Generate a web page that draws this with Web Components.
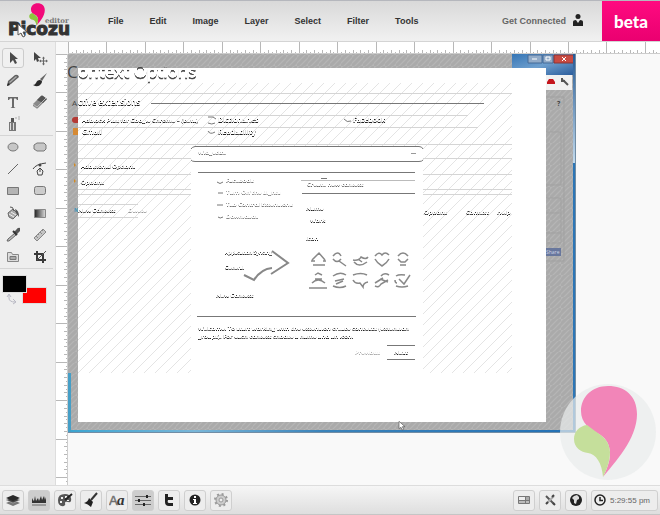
<!DOCTYPE html>
<html lang="en">
<head>
<meta charset="utf-8">
<title>Picozu editor</title>
<style>
html,body{margin:0;height:100%}
body{font-family:"Liberation Sans",Arial,sans-serif;font-size:9px;color:#444;background:#f9f9f9}
</style>
</head>
<body>
<pz-editor></pz-editor>
<script>
const ICONS = {
 pointer:'<path d="M5 2v11l3-3 2 4 2-1-2-4h3z" fill="#4a4a4a"/>',
 move:'<path d="M2 2v9l2-2 1 3 2-1-1-3h3z" fill="#444"/><path d="M11.500 7.500v7M8 11h7" fill="none" stroke="#666"/><path d="M10 8.500l1.500-2 1.500 2zM10 13.500l1.500 2 1.500-2zM9 9.500 7 11l2 1.500zM14 9.500l2 1.500-2 1.500z" fill="#666"/>',
 pencil:'<path d="M2 14l1-5 7-6q3-1 4 2l-8 7z" fill="#606060"/><path d="M4 10l7-6 1 1-7 6z" fill="#aaa"/><path d="M2 14l1-3 2 2z" fill="#222"/>',
 brush:'<path d="M15 1 8 7l2 2z" fill="#666"/><path d="M8 8q-3 0-4 3-1 2-3 2 5 3 8-1 1-1 1-3z" fill="#2a2a2a"/>',
 type:'<path d="M3 3h10v3h-1l-1-1.500H9V13l1.500 1h-5L7 13V4.500H5L4 6H3z" fill="#6a6a6a"/>',
 eraser:'<path d="M1 10l8-8q1-1 2 0l4 3-9 9q-1 1-2 0l-3-2z" fill="#8a8a8a"/><path d="M9 2q1-1 2 0l4 3-4 4-6-3z" fill="#555"/><path d="M1 10l4 3 9-9" fill="none" stroke="#bbb"/>',
 spray:'<path d="M4 6h7v9H4z" fill="#777"/><path d="M5 7h1v7H5zM8 7h1v7H8z" fill="#ddd"/><path d="M6 2h3v4H6z" fill="#555"/><path d="M10 2h2M13 1h2M13 3h2" stroke="#aaa"/>',
 ellipse:'<ellipse cx="8" cy="8" rx="5" ry="4" fill="#c6c6c6" stroke="#777"/>',
 hexagon:'<path d="M5 4h7l2 2v4l-2 2H5l-3-2V6z" fill="#c6c6c6" stroke="#777"/>',
 line:'<path d="M3 13 13 3" stroke="#666"/>',
 pen:'<path d="M1 8Q4 3 14 2" fill="none" stroke="#444"/><circle cx="8" cy="4" r="1.500" fill="#444"/><path d="M8 7l3 3-1 4H6l-1-4z" fill="#eee" stroke="#444"/><path d="M8 8v3" stroke="#444"/>',
 rect:'<path d="M2.500 4.500h11v7h-11z" fill="#b4b4b4" stroke="#777"/>',
 rounded:'<rect x="2.500" y="3.500" width="11" height="8" rx="2" fill="#ccc" stroke="#777"/>',
 bucket:'<path d="M3 8l5-4 5 5-5 5-4-2z" fill="#aaa" stroke="#666"/><path d="M5 2q3-1 4 4" stroke="#555" fill="none"/><path d="M10 4q4 1 4 8l-3-4z" fill="#555"/><path d="M4 9l5 3M6 7l5 3" stroke="#eee"/>',
 gradient:'<defs><linearGradient id="g"><stop stop-color="#222"/><stop offset="1" stop-color="#ddd"/></linearGradient></defs><path d="M2.500 4.500h11v8h-11z" fill="url(#g)" stroke="#888"/>',
 dropper:'<path d="M15 1q-2-1-4 2L9 5l3 2 3-3z" fill="#555"/><path d="M10 6 3 12l-1 2h2l7-6z" fill="#bbb" stroke="#666"/><path d="M8 4l4 4" stroke="#333" stroke-width="2"/>',
 ruler:'<path d="M2 11 11 2l3 3-9 9z" fill="#c4c4c4" stroke="#888"/><path d="M4 9l2 2M6 7l1 1M8 5l2 2M10 3l1 1" stroke="#888"/>',
 picture:'<path d="M2.500 3.500h4l1 2h6v7h-11z" fill="#ddd" stroke="#888"/><path d="M5 7.500h6v3H5z" fill="#aaa" stroke="#777"/>',
 crop:'<path d="M5 2v9h9M2 5h9v9" stroke="#3a3a3a" stroke-width="2" fill="none"/><path d="M5 11 14 2" stroke="#555"/>',
 layers:'<path d="M1 11l7-3 7 3-7 3z" fill="#777"/><path d="M1 8l7-3 7 3-7 3z" fill="#444" stroke="#ccc" stroke-width=".5"/><path d="M1 6l7-3 7 3-7 3z" fill="#2a2a2a"/>',
 histogram:'<path d="M1 11V6l1 2 1 1 1-5 1 5 2-3 1 3 2-5 1 4 2-4 1 4 1-3v6z" fill="#333"/><path d="M1 13h14" stroke="#666"/>',
 palette:'<path d="M8 2q-7 0-7 6 0 7 6 6 2-1 1-3 0-2 3-1 4 1 3-4-1-4-6-4z" fill="#555"/><path d="M4 5h2v2H4zM8 4h2v2H8zM3 9h2v2H3zM10 8h2v1h-2z" fill="#eee"/><path d="M15 2 8 8" stroke="#222" stroke-width="2"/>',
 broom:'<path d="M14 1 8 8" stroke="#333" stroke-width="2"/><path d="M6 6l4 4-2 5q-3-3-7-4 4-1 5-5z" fill="#222"/>',
 sliders:'<path d="M0 4.500h16M0 8.500h16M0 12.500h16" stroke="#666"/><path d="M11 3h2v3h-2zM3 7h2v3H3zM8 11h2v3H8z" fill="#222"/>',
 tee:'<path d="M4 2h3v3h5v3H7q-1 3 1 3h4v3H8q-4 0-4-4z" fill="#222"/>',
 info:'<circle cx="8" cy="8" r="5.500" fill="#222"/><path d="M7 4h2v2H7zM6 7h3v4h1v1H6v-1h1V8H6z" fill="#fff"/>',
 gear:'<circle cx="8" cy="8" r="5" fill="#ccc" stroke="#999"/><circle cx="8" cy="8" r="6" fill="none" stroke="#999" stroke-width="2" stroke-dasharray="2 2.700"/><circle cx="8" cy="8" r="2" fill="#eee" stroke="#999"/>',
 layout:'<path d="M2.500 4.500h11v7h-11z" fill="#eee" stroke="#777"/><path d="M9 5h4v3H9z" fill="#aaa"/><path d="M3 9h10v2H3z" fill="#bbb"/><path d="M9.500 4v8M2 8.500h12" stroke="#777"/>',
 wrench:'<path d="M4 4l8 8" stroke="#555" stroke-width="2"/><path d="M12 4 5 11" stroke="#aaa" stroke-width="2"/><path d="M10 5l2-2M4 12l2-2M11 11l2 2" stroke="#444" stroke-width="2"/>',
 globe:'<circle cx="8" cy="8" r="6" fill="#222"/><path d="M6 4l3-1 2 2v2l-2 1-1 4-2-1V8L4 6z" fill="#ddd"/>',
 clock:'<circle cx="8" cy="8" r="5" fill="none" stroke="#222" stroke-width="1.500"/><path d="M8 5v3.500h3" fill="none" stroke="#222" stroke-width="1.500"/>',
 user:'<circle cx="8" cy="3.500" r="2.500" fill="#222"/><path d="M3 13V9q0-2 3-2l2 3 2-3q3 0 3 2v4z" fill="#222"/>',
 font:'<text x="0" y="13" font-family="Liberation Sans" font-size="13" fill="#666" stroke="#777" stroke-width=".5">A</text><text x="8" y="13" font-family="Liberation Serif" font-style="italic" font-weight="700" font-size="15" fill="#333">a</text>'
};
const LEAF = '<path d="M603 478C615 463 637 440 637 415C637 397 625 387 608 387C592 387 581 398 581 412C581 424 590 430 597 434C605 438 610 444 610 455C610 463 606 472 603 478z" fill="var(--pink)"/><path d="M587 426C579 427 574 433 574 440C574 449 581 453 588 454C596 455 602 464 603 478C606 472 610 463 610 453C609 442 604 438 595 432z" fill="var(--green)"/>';
const CURSOR = '<path d="M0 0v11l3-2 2 4 2-1-2-4h4z" fill="#fff" stroke="#555"/>';

function define(name, html, setup) {
  customElements.define(name, class extends HTMLElement {
    connectedCallback() {
      if (this.shadowRoot) return;
      this.attachShadow({mode:'open'}).innerHTML = typeof html === 'function' ? html(this) : html;
      if (setup) setup(this, this.shadowRoot);
    }
  });
}

define('pz-icon', el => `<style>:host{display:block;width:16px;height:16px}svg{display:block}</style>
<svg width="16" height="16" viewBox="0 0 16 16" aria-hidden="true">${ICONS[el.getAttribute('name')]}</svg>`);

define('pz-tool', el => `<style>:host{display:flex;justify-content:center;align-items:center;height:22px}
button{display:flex;align-items:center;justify-content:center;width:22px;height:20px;padding:0;border:1px solid transparent;border-radius:3px;background:none}
:host([active]) button{border-color:#ccc;background:#f0f0f0}</style>
<button aria-label="${el.getAttribute('name')}"><pz-icon name="${el.getAttribute('name')}"></pz-icon></button>`);

define('pz-bar-button', el => `<style>:host{display:block}
button{display:flex;align-items:center;justify-content:center;gap:2px;min-width:22px;height:21px;padding:0 2px;border:1px solid #cfcfcf;border-radius:3px;background:#ededed;font:8px "Liberation Sans",Arial,sans-serif;color:#666;box-sizing:border-box}
:host([wide]) button{padding:0 7px 0 0}
:host([active]) button{background:#cdcdcd}</style>
<button aria-label="${el.getAttribute('name')}"><pz-icon name="${el.getAttribute('name')}"></pz-icon><slot></slot></button>`);

define('pz-logo', `<style>:host{display:block;--pink:#f2097a;--green:#8cc63f}svg{display:block}</style>
<svg width="72" height="40" viewBox="0 0 72 40" role="img" aria-label="Picozu editor">
<text x="8" y="34" font-family="DejaVu Sans" font-weight="700" font-size="17" fill="#333" stroke="#333">Picozu</text>
<text x="45" y="22" font-family="DejaVu Serif" font-weight="700" font-size="7" fill="#777">editor</text>
<svg x="28" y="2" width="18" height="23" viewBox="573 386 65 93">${LEAF}</svg>
<g transform="translate(18 23)">${CURSOR}</g>
</svg>`);

define('pz-header', `<style>
:host{display:flex;align-items:stretch;height:40px;border-top:1px solid #b5b7bd;border-bottom:1px solid #d4d4d4;background:linear-gradient(#d9d9d9,#f1f1f1)}
nav{display:flex;align-items:center;gap:26px;padding-left:36px;flex:1}
a{color:#333;text-decoration:none;font-weight:700;font-size:9px;line-height:12px}
.user{display:flex;align-items:center;gap:4px;padding-right:16px;color:#666}
.beta{display:flex;align-items:center;justify-content:center;width:58px;background:linear-gradient(#ff0a80,#ea0070);color:#fff;font:900 17px Lato,sans-serif}
</style><pz-logo></pz-logo>
<nav><a href="#">File</a><a href="#">Edit</a><a href="#">Image</a><a href="#">Layer</a><a href="#">Select</a><a href="#">Filter</a><a href="#">Tools</a></nav>
<a class="user" href="#">Get Connected <pz-icon name="user"></pz-icon></a><div class="beta">beta</div>`);

const tools = (...n) => n.map(t => `<pz-tool name="${t}"${t==='pointer'?' active':''}></pz-tool>`).join('');
define('pz-toolbox', `<style>
:host{display:block;background:#eee;padding:5px 2px 0 0;border-right:1px solid #ddd;box-sizing:border-box}
.group{display:grid;grid-template-columns:1fr 1fr;border-bottom:1px solid #d5d5d5}
.colors{display:grid;grid-template-columns:20px 5px 20px;grid-template-rows:12px 6px 11px;padding:6px 0 0 2px}
.colors button{padding:0;border:1px solid #ddd}
.fg{grid-area:1/1/3/3;background:#000;z-index:1}.bg{grid-area:2/2/4/4;background:#f00}
svg{grid-area:3/1;margin-left:4px}
</style>
<div class="group">${tools('pointer','move','pencil','brush','type','eraser','spray')}</div>
<div class="group">${tools('ellipse','hexagon','line','pen','rect','rounded','bucket','gradient','dropper','ruler','picture','crop')}</div>
<div class="colors"><button class="fg" aria-label="Foreground"></button><button class="bg" aria-label="Background"></button>
<svg width="12" height="12"><path d="M3 2v3q0 4 6 4M1 4l2-3 2 3M7 6l3 3-3 2" fill="none" stroke="#b9b9c4"/></svg></div>`);

define('pz-ruler', `<style>:host{display:block;background:#fff;overflow:hidden;min-width:0;min-height:0}svg{display:block}</style><svg></svg>`, (el, root) => {
  const vertical = el.hasAttribute('vertical'), svg = root.querySelector('svg');
  let d = '';
  for (let i = 0; i < 600; i++) {
    const p = Math.round(i * 50 / 13), len = i % 10 === 0 ? 12 : i % 2 ? 2 : 4;
    d += vertical ? `M${12-len} ${p}h${len}v1h-${len}z` : `M${p} ${12-len}h1v${len}h-1z`;
  }
  svg.setAttribute('width', vertical ? 12 : '100%');
  svg.setAttribute('height', vertical ? '100%' : 12);
  svg.innerHTML = `<path d="${d}" fill="#b8b8b8"/>` + (vertical ? '<path d="M11 0h1v2400h-1z" fill="#ccc"/>' : '<path d="M0 11h2400v1H0z" fill="#ccc"/>');
});

define('pz-artwork', `<style>:host{display:block}svg{display:block;font-family:"Open Sans",sans-serif}</style>
<svg width="508" height="379" viewBox="68 54 508 379" role="img" aria-label="Document">
<defs>
<pattern id="dark" width="11" height="11" patternUnits="userSpaceOnUse"><path d="M0 0h11v11H0z" fill="#b5b5b5"/><path d="M-1 6 6-1M0 11 11 0M5 12l7-7" stroke="#aaa" stroke-width="3"/></pattern>
<pattern id="light" width="11" height="11" patternUnits="userSpaceOnUse"><path d="M0 11 11 0" stroke="#e4e4e4"/></pattern>
<linearGradient id="title" x1="0" x2="1" y1="0" y2="1"><stop stop-color="#3575b5"/><stop offset=".5" stop-color="#6e9fce"/><stop offset="1" stop-color="#285a9a"/></linearGradient>
<linearGradient id="edge" x1="0" x2="0" y1="0" y2="1"><stop stop-color="#245a96"/><stop offset="1" stop-color="#c5dcee"/></linearGradient>
<linearGradient id="bottom"><stop stop-color="#3ba4d0"/><stop offset=".25" stop-color="#79b6d8"/><stop offset=".5" stop-color="#3a83ba"/><stop offset="1" stop-color="#2471b5"/></linearGradient>
<filter id="relief" x="-5%" y="-20%" width="110%" height="150%" color-interpolation-filters="sRGB"><feOffset in="SourceAlpha" dy="-1"/><feComponentTransfer result="up"><feFuncA type="linear" slope="2.500"/></feComponentTransfer><feComposite in="SourceGraphic" in2="up" operator="out"/><feComponentTransfer><feFuncA type="linear" slope="1.500"/></feComponentTransfer></filter>
<filter id="relief-large" x="-5%" y="-20%" width="110%" height="150%" color-interpolation-filters="sRGB"><feOffset in="SourceAlpha" dy="-2"/><feComponentTransfer result="up"><feFuncA type="linear" slope="3"/></feComponentTransfer><feComposite in="SourceGraphic" in2="up" operator="out"/></filter>
</defs>
<path d="M68 54h508v379H68z" fill="url(#dark)"/>
<path d="M512 54h64v21h-64z" fill="url(#title)"/>
<path d="M546 75h26v15h-26z" fill="#f2f2f2"/>
<path d="M528 55h14v8h-14zM543 55h10v8h-10z" fill="#92abc8" stroke="#456b98"/><path d="M554 55h20v8h-20z" fill="#c94b42" stroke="#8b3434"/>
<path d="M532 59h5M546 57h4v3h-4zM562 57l4 4M566 57l-4 4" stroke="#fff" fill="none"/>
<path d="M547 82l2-3h4l2 3v2h-8z" fill="#c4151c"/><path d="M563 80l5 5" stroke="#555" stroke-width="2"/><path d="M562 78v3h3" stroke="#555" stroke-width="2" fill="none"/>
<path d="M546 97h18v164h-18M546 132h15v53h-15M546 198h15v45h-15M546 213h15M546 233h15" fill="none" stroke="#a1a1a1"/>
<text x="557" y="106" font-size="7" font-weight="700" fill="#444">?</text>
<path d="M546 248h15v8h-15z" fill="#68779d"/><text x="546" y="254" font-size="5" fill="#cdd4e4">Share</text>
<path d="M573 54h3v110h-3z" fill="url(#edge)"/><path d="M573 163h3v270h-3z" fill="#2c76b6"/>
<path d="M68 430h508v3H68z" fill="url(#bottom)"/><path d="M68 373h3v60h-3z" fill="#459ec6"/><path d="M68 432.500h508M575.500 54v379" stroke="#718da5"/>
<g fill="#444"><text x="67" y="78" font-size="17">C</text><text x="72" y="106" font-size="8">A</text></g>
<path d="M78 117h-3q-3 0-3 3t3 3h3z" fill="#b43a35"/><path d="M73 128h5v7h-5z" fill="#d58a35"/><path d="M74 163l2 2-2 2zM74 179l2 2-2 2z" fill="#d18c28"/><text x="74" y="212" font-size="5" font-weight="700" fill="#3a93b7">N</text>
<path d="M78 68h468v354H78z" fill="#fff"/>
<path d="M78 83h434v290H78z" fill="url(#light)"/>
<path d="M78 93.500h434M78 115.500h390M78 127.500h400M78 144.500h434M78 158.500h434M78 174.500h434M78 189.500h434M78 194.500h434M78 204.500h60M78 217.500h60" stroke="#d5d5d5"/>
<path d="M191 147h232v226H191z" fill="#fff"/>
<path d="M151 103.500h333" stroke="#777"/>
<g filter="url(#relief-large)" fill="#444" stroke="#444" stroke-width=".5"><text x="78" y="79" font-size="17">ontext Options</text></g>
<g filter="url(#relief)" fill="#222" font-size="7" font-weight="600">
<text x="78" y="106" font-size="8">ctive extensions</text>
<text x="82" y="123" font-size="6">Adblock Plus for Google Chrome – (beta)</text><text x="218" y="123">Dictionaries</text><text x="353" y="123">Facebook</text><text x="82" y="135">Gmail</text><text x="218" y="135">Readability</text>
<text x="81" y="169" font-size="6">Additional Options</text><text x="81" y="185" font-size="6">Options</text><text x="78" y="213" font-size="6">New Context</text><text x="128" y="213" font-size="6" fill="#999">Delete</text>
<text x="198" y="155" fill="#777" font-size="6">Widgetize</text>
<g font-size="6"><text x="226" y="183" fill="#666">Facebook</text><text x="226" y="195" fill="#888">Turn Off the Lights</text><text x="226" y="207" fill="#777">Tab Control Extensions</text><text x="226" y="219" fill="#888">Downloads</text><text x="307" y="187" fill="#666">Create new context</text>
<text x="306" y="211">Name</text><text x="310" y="223">Work</text><text x="306" y="241">Icon</text>
<text x="225" y="255" font-size="5">Application Syncing</text><text x="225" y="270" font-size="5">General</text><text x="216" y="298">New Context</text>
<text x="424" y="215">Options</text><text x="466" y="215">Context</text><text x="497" y="215">Help</text>
<text x="198" y="331">Welcome. To start working with the extension create contexts (extension</text><text x="198" y="339">groups). For each context choose a name and an icon.</text>
<text x="355" y="355" fill="#aaa">Previous</text><text x="394" y="355">Next</text></g>
</g>
<g fill="none" stroke="#777">
<path d="M208 117h5l3 2M208 123q4 2 7 0M208 131q2 4 7 1"/>
<path d="M191 149q1-2 4-2.500h224q3 0 4 2.500M191 160q1 1.500 4 1.500h224q3 0 4-1.500"/><path d="M198 172.500h217M302 193.500h113M387 345.500h28M387 359.500h28M321 178.500h6"/><path d="M197 316.500h219"/><path d="M301 180.500h114" stroke="#bbb"/><path d="M411 153.500h5" stroke="#999"/>
<path d="M217 182q3 3 6 0M218 193h5M217 205h6M218 217q2 2 5 0"/>
<path d="M344 119q3 4 7 2"/>
</g>
<path d="M244 275l10 5q7-11 18-12M272 251l16 12-17 11" fill="none" stroke="#888" stroke-width="2"/>
<g fill="none" stroke="#888" stroke-width="1.500">
<path d="M312 260l7-7 6 7M313 265h12M311 261h4M323 261h3"/>
<path d="M333 256q5-6 8 0M333 259q4 5 8 0M339 261l7 5"/>
<path d="M353 260q6 1 8-3 5 3 7 0M354 262q5 6 13 0M358 259l4 3"/>
<path d="M375 256q4-5 7-1 3-4 7 0M375 259q2 4 7 7 5-3 7-7"/>
<path d="M398 256q5-6 10 0M398 259l3 3h4l3-3M400 265h6"/>
<path d="M315 275l3-2 4 2M312 283q6-6 13 0M309 288h18M315 279h7"/>
<path d="M333 276q7-5 13-1M335 281l9-2M333 286q7 3 13 0M336 284l7-3"/>
<path d="M353 275q8-3 14 0M353 280q2 4 7 3l3 4q0-4 5-5"/>
<path d="M381 276q3-4 8-1M380 279l8 3M375 283l8-5M375 286q4 2 6-2l7-4"/>
<path d="M396 276q3-2 9-1M399 279l5 5 6-9M395 280q0 3 2 3M396 286q6 2 12 0"/>
</g>
<svg x="399" y="421" width="10" height="14" viewBox="0 0 15 20" overflow="visible">${CURSOR}</svg>
</svg>`);

define('pz-workspace', `<style>
:host{display:block;position:relative;overflow:hidden;background:#f9f9f9;min-width:0;min-height:0}
.mark{position:absolute;right:4px;bottom:5px;--pink:#f285b8;--green:#c5df9b}
svg{display:block}
</style><pz-artwork></pz-artwork>
<svg class="mark" width="96" height="96" viewBox="560 385 96 96"><circle cx="608" cy="433" r="48" fill="#e9edec" opacity=".7"/>${LEAF}</svg>`);

define('pz-statusbar', `<style>
:host{display:flex;align-items:center;gap:4px;height:28px;padding:0 2px;border-top:1px solid #ddd;border-bottom:1px solid #c5c5c5;background:linear-gradient(#f6f6f6,#dedede)}
.space{flex:1}</style>
<pz-bar-button name="layers"></pz-bar-button><pz-bar-button name="histogram" active></pz-bar-button><pz-bar-button name="palette"></pz-bar-button><pz-bar-button name="broom"></pz-bar-button><pz-bar-button name="font"></pz-bar-button><pz-bar-button name="sliders" active></pz-bar-button><pz-bar-button name="tee"></pz-bar-button><pz-bar-button name="info"></pz-bar-button><pz-bar-button name="gear"></pz-bar-button>
<span class="space"></span>
<pz-bar-button name="layout"></pz-bar-button><pz-bar-button name="wrench"></pz-bar-button><pz-bar-button name="globe"></pz-bar-button><pz-bar-button name="clock" wide>5:29:55 pm</pz-bar-button>`);

define('pz-editor', `<style>
:host{display:grid;height:100vh;grid-template-rows:42px 12px 1fr 30px;grid-template-columns:56px 12px 1fr;background:#f9f9f9}
pz-header,pz-statusbar{grid-column:1/-1}
pz-toolbox{grid-column:1;grid-row:2/4}
.h{grid-column:3;grid-row:2}.v{grid-column:2;grid-row:3}
pz-workspace{grid-column:3;grid-row:3}
pz-statusbar{grid-row:4}
</style>
<pz-header></pz-header><pz-toolbox></pz-toolbox><pz-ruler class="h"></pz-ruler><pz-ruler class="v" vertical></pz-ruler><pz-workspace></pz-workspace><pz-statusbar></pz-statusbar>`);
</script>
</body>
</html>
